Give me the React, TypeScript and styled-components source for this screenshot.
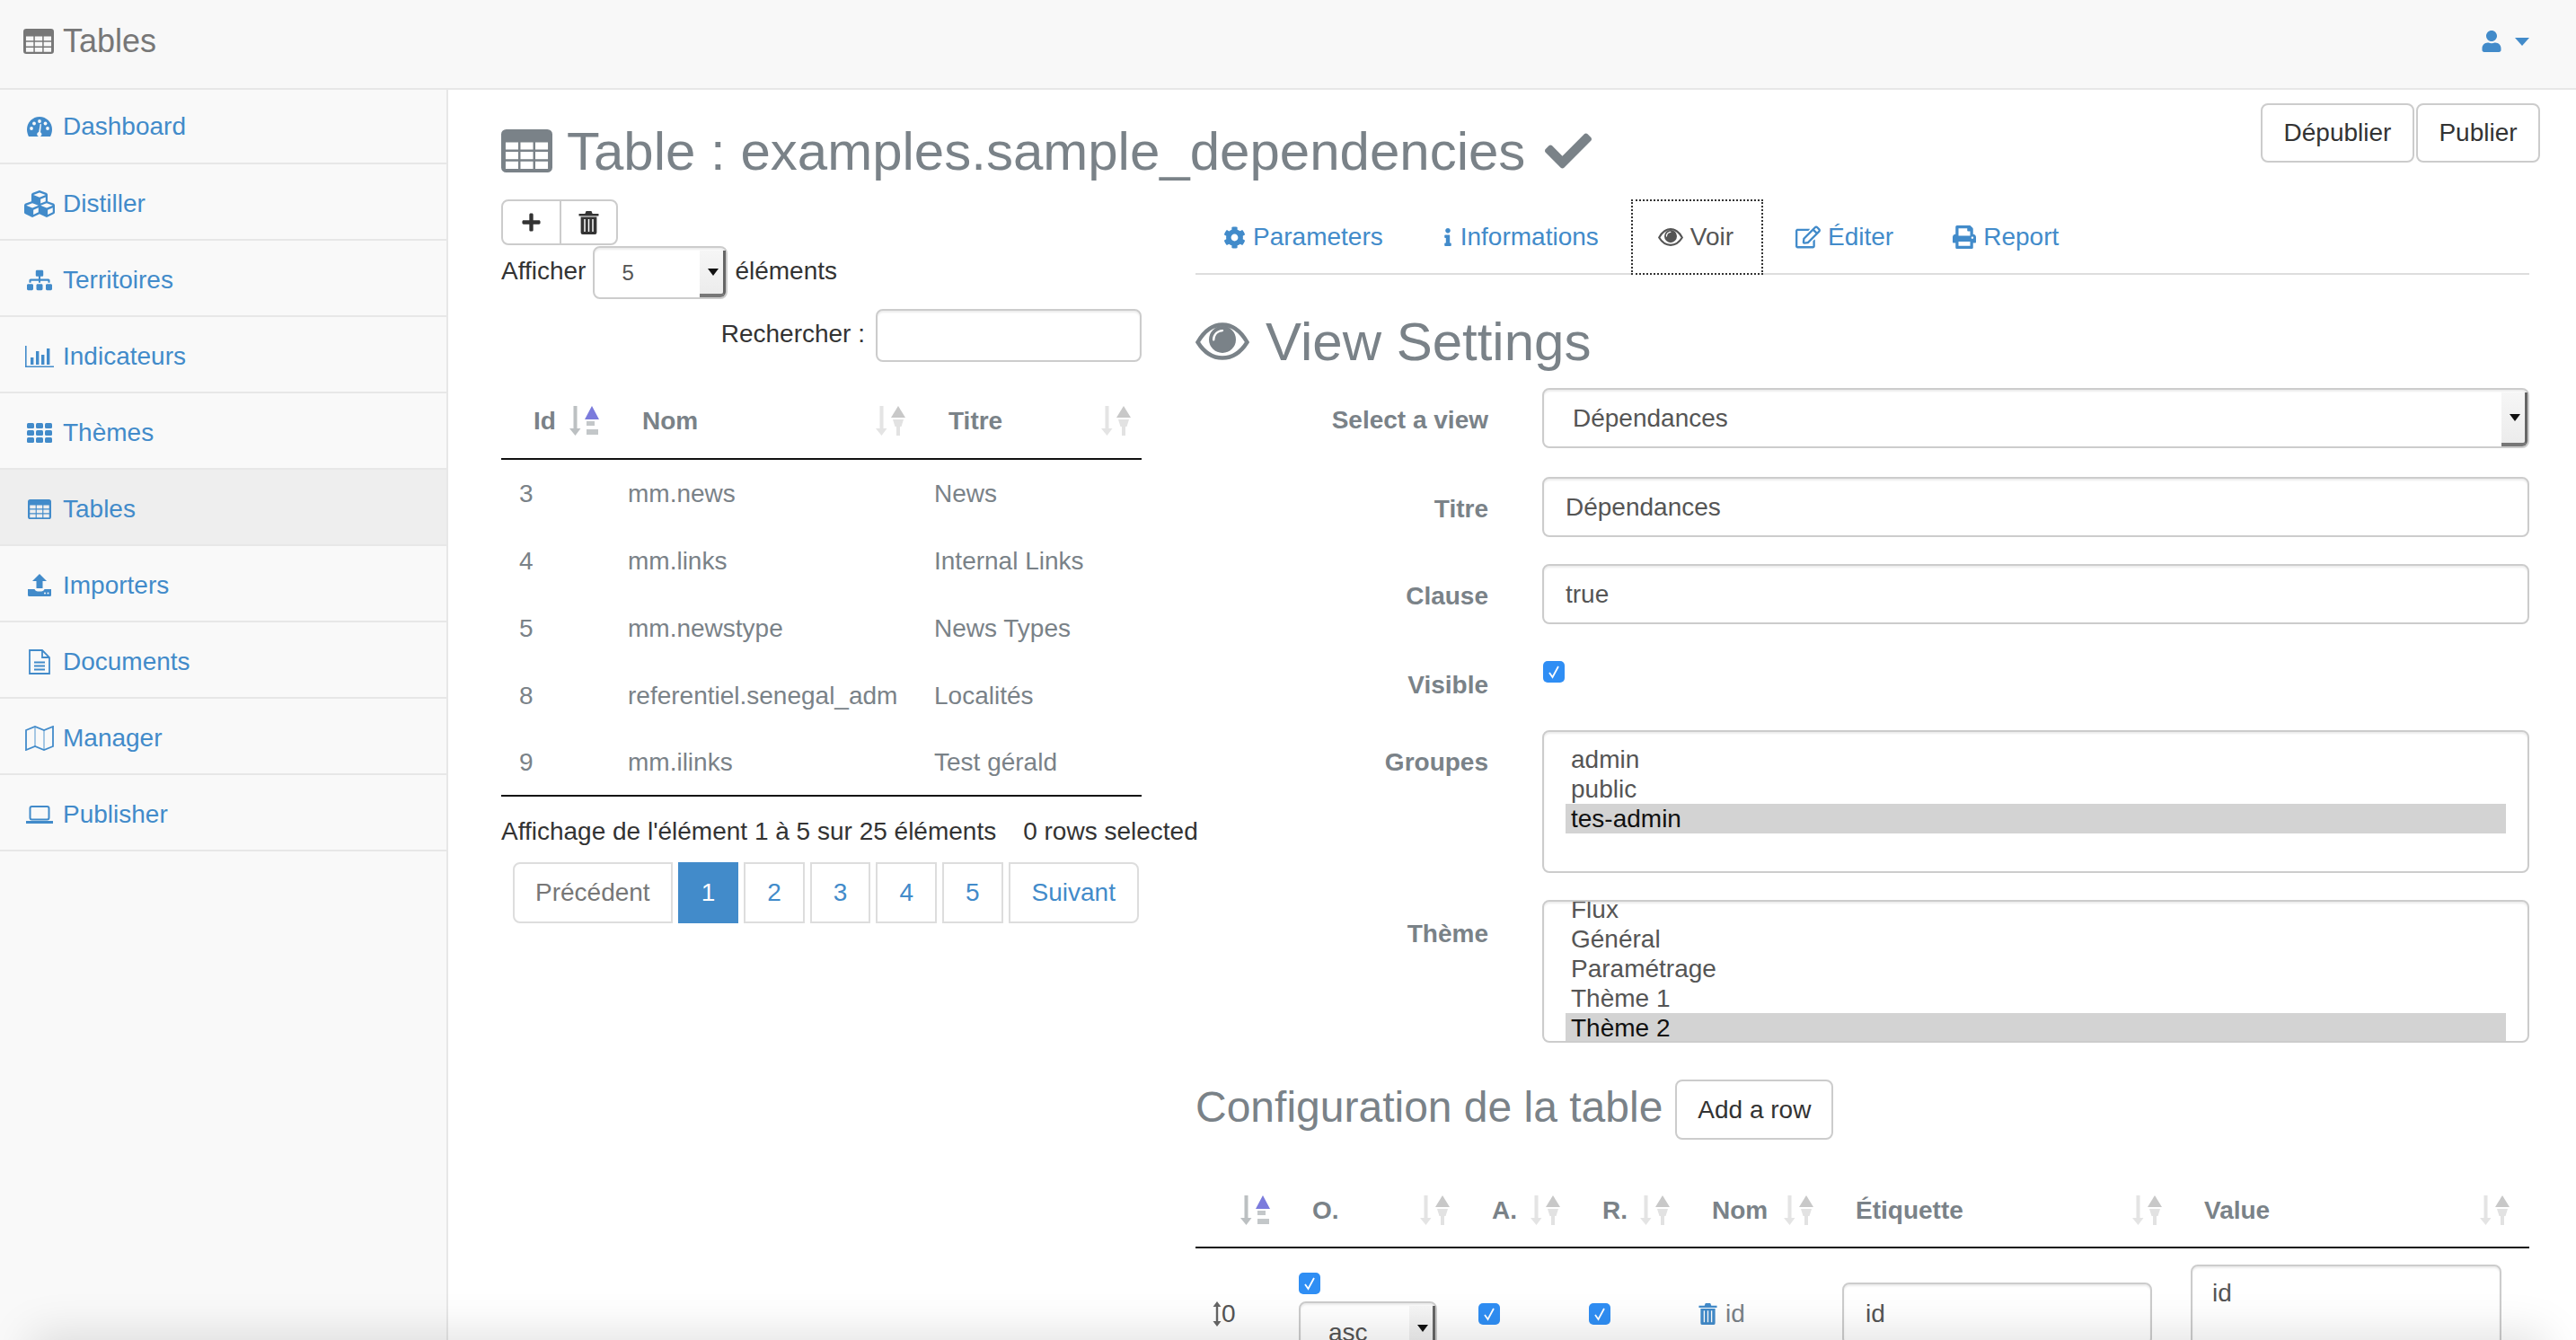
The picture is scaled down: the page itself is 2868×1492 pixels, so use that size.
import React from 'react'
import styled, { createGlobalStyle } from 'styled-components'
import { FaCubes, FaSitemap, FaCheck, FaPlus, FaUser, FaCog, FaInfo, FaPrint, FaRegEdit } from 'react-icons/fa'

const colors = {
  blue: '#428bca',
  grey: '#7a8288',
  text: '#333',
  line: '#e7e7e7',
  field: '#ccc',
}

const GlobalStyle = createGlobalStyle`
  html, body { margin: 0; padding: 0; height: 100%; background: #fff; }
  body { font-family: "Liberation Sans", Arial, sans-serif; font-size: 28px; color: ${colors.text}; }
  * { box-sizing: border-box; }
`

// fa-table, holes are cut out so the row colour shows through
const tableHoles = () => {
  let d = 'M3 0h24a3 3 0 0 1 3 3v20a3 3 0 0 1-3 3H3a3 3 0 0 1-3-3V3a3 3 0 0 1 3-3z'
  for (let r = 0; r < 3; r++) {
    for (let c = 0; c < 3; c++) {
      const x = 2.6 + c * 8.7
      const y = 7.8 + r * 5.8
      d += `M${x} ${y}h7.4v4.4h-7.4z`
    }
  }
  return d
}

const TableIcon = ({ w, h }: { w: number; h: number }) => (
  <svg width={w} height={h} viewBox="0 0 30 26" preserveAspectRatio="none" fill="currentColor">
    <path fillRule="evenodd" d={tableHoles()} />
  </svg>
)

const GaugeIcon = () => (
  <svg width="28" height="22" viewBox="0 0 28 22" fill="currentColor">
    <path d="M14 0C6.3 0 0 6.3 0 14c0 3 .8 5.7 2 8h24c1.2-2.3 2-5 2-8 0-7.700-6.300-14-14-14z" />
    <g fill="#f9f9f9">
      <circle cx="5" cy="13" r="1.900" />
      <circle cx="8" cy="7.500" r="1.900" />
      <circle cx="14" cy="5" r="1.900" />
      <circle cx="20.500" cy="7.500" r="1.900" />
      <circle cx="23" cy="13" r="1.900" />
      <path d="M13.200 17l1.500-9 1.300.2-1 9a2.600 2.600 0 1 1-1.800-.2z" />
    </g>
  </svg>
)

const BarsIcon = () => (
  <svg width="32" height="24" viewBox="0 0 32 24" fill="currentColor">
    <path d="M0 0h1.600v22.400H32V24H0z" />
    <rect x="6" y="13" width="3.400" height="8" />
    <rect x="12" y="6" width="3.400" height="15" />
    <rect x="18" y="10" width="3.400" height="11" />
    <rect x="24" y="3" width="3.400" height="18" />
  </svg>
)

const GridIcon = () => (
  <svg width="28" height="22" viewBox="0 0 28 22" fill="currentColor">
    {[0, 8, 16].map(y =>
      [0, 10, 20].map(x => <rect key={`${x}-${y}`} x={x} y={y} width="8" height="6" rx="1.500" />)
    )}
  </svg>
)

const UploadIcon = () => (
  <svg width="26" height="25" viewBox="0 0 26 25" fill="currentColor">
    <path fillRule="evenodd" d="M13 0l8 8h-4.500v8h-7V8H5zM0 17h7.500c.5 1.500 2 2.500 3.500 2.500h4c1.500 0 3-1 3.500-2.500H26v6.500a1.500 1.500 0 0 1-1.500 1.500h-23A1.500 1.500 0 0 1 0 23.500zM19 20.500a1 1 0 1 0 0 2 1 1 0 0 0 0-2zm3.500 0a1 1 0 1 0 0 2 1 1 0 0 0 0-2z" />
  </svg>
)

const FileIcon = () => (
  <svg width="24" height="28" viewBox="0 0 24 28" fill="none" stroke="currentColor" strokeWidth="1.800">
    <path d="M1 1h14l8 8v18H1zM15 1v8h8" />
    <path d="M6 14.500h12M6 18.500h12M6 22.500h12" />
  </svg>
)

const MapIcon = () => (
  <svg width="32" height="28" viewBox="0 0 32 28" fill="none" stroke="currentColor" strokeWidth="1.800">
    <path d="M1 5l10-4 10 4 10-4v22l-10 4-10-4-10 4z" />
    <path d="M11 2v21M21 5v21" strokeOpacity="0.5" />
  </svg>
)

const LaptopIcon = () => (
  <svg width="30" height="20" viewBox="0 0 30 20" fill="none" stroke="currentColor">
    <rect x="4.500" y="1" width="21" height="14.500" rx="2" strokeWidth="2" />
    <path d="M0 18.500h30" strokeWidth="3" />
  </svg>
)

const EyeIcon = ({ w, h, hole = '#fff' }: { w: number; h: number; hole?: string }) => (
  <svg width={w} height={h} viewBox="0 0 60 42" preserveAspectRatio="none">
    <path d="M2.500 22C10 9 20 2.500 30 2.500S50 9 57.500 22C50 34 40 39.500 30 39.500S10 34 2.500 22z" fill="none" stroke="currentColor" strokeWidth="4.500" />
    <circle cx="30" cy="19" r="15" fill="currentColor" />
    <path d="M19 19c0-6 5-11 11-11 1.500 0 2 2-1 2.500-5 .5-7 4-7.500 8.500-.3 2-2.500 2-2.500 0z" fill={hole} />
  </svg>
)

const TrashIcon = ({ w, h, hole = '#fff' }: { w: number; h: number; hole?: string }) => (
  <svg width={w} height={h} viewBox="0 0 22 26" preserveAspectRatio="none" fill="currentColor">
    <path d="M7 3l1.200-3h5.600L15 3h6.500v2.500H.5V3zM2.500 6.500h17V24a2 2 0 0 1-2 2h-13a2 2 0 0 1-2-2z" />
    <g fill={hole}>
      <rect x="6" y="9" width="1.400" height="14" />
      <rect x="10.300" y="9" width="1.400" height="14" />
      <rect x="14.600" y="9" width="1.400" height="14" />
    </g>
  </svg>
)

const SortIcon = ({ active }: { active?: boolean }) => (
  <svg width="35" height="33" viewBox="0 0 35 33">
    <path d="M5.500 0h4v25h4L7.500 33 1 25h4.500z" fill={active ? '#bcc0c2' : '#e4e4e4'} />
    {active ? (
      <>
        <path d="M26 0l8 15H18z" fill="#7b7bdc" />
        <rect x="20" y="17" width="9" height="5" fill="#c3c7c9" />
        <rect x="20" y="26" width="13" height="6" fill="#c3c7c9" />
      </>
    ) : (
      <>
        <path d="M26 0l8 13H18z" fill="#c8c8c8" />
        <path d="M20 15h12l-2.500 8h-1.500v10h-4V23h-1.500z" fill="#e2e2e2" />
      </>
    )}
  </svg>
)

const MoveIcon = () => (
  <svg width="10" height="28" viewBox="0 0 10 28" fill="#666">
    <path d="M5 0l4.500 6H6.200v16h3.300L5 28 .5 22h3.300V6H.5z" />
  </svg>
)

const CheckBox = () => (
  <S.Check>
    <svg width="14" height="16" viewBox="0 0 14 16" fill="none" stroke="#fff" strokeWidth="1.800">
      <path d="M2 9l3.500 5L12 2" />
    </svg>
  </S.Check>
)

const menu = [
  { label: 'Dashboard', icon: <GaugeIcon /> },
  { label: 'Distiller', icon: <FaCubes size={34} /> },
  { label: 'Territoires', icon: <FaSitemap size={28} /> },
  { label: 'Indicateurs', icon: <BarsIcon /> },
  { label: 'Thèmes', icon: <GridIcon /> },
  { label: 'Tables', icon: <TableIcon w={26} h={22} />, active: true },
  { label: 'Importers', icon: <UploadIcon /> },
  { label: 'Documents', icon: <FileIcon /> },
  { label: 'Manager', icon: <MapIcon /> },
  { label: 'Publisher', icon: <LaptopIcon /> },
]

const rows = [
  ['3', 'mm.news', 'News'],
  ['4', 'mm.links', 'Internal Links'],
  ['5', 'mm.newstype', 'News Types'],
  ['8', 'referentiel.senegal_adm', 'Localités'],
  ['9', 'mm.ilinks', 'Test gérald'],
]

export default function App() {
  return (
    <S.Page>
      <GlobalStyle />
      <S.Navbar>
        <S.Brand>
          <TableIcon w={34} h={28} />
          Tables
        </S.Brand>
        <S.UserMenu>
          <FaUser size={24} />
          <S.Caret />
        </S.UserMenu>
      </S.Navbar>

      <S.Body>
        <S.Sidebar>
          {menu.map(item => (
            <S.MenuItem key={item.label} $active={item.active}>
              <S.MenuIcon>{item.icon}</S.MenuIcon>
              {item.label}
            </S.MenuItem>
          ))}
        </S.Sidebar>

        <S.Main>
          <S.TitleRow>
            <S.Title>
              <TableIcon w={57} h={48} />
              Table : examples.sample_dependencies
              <FaCheck size={52} />
            </S.Title>
            <S.PublishGroup>
              <S.Button $width={171} $height={66}>Dépublier</S.Button>
              <S.Button $width={138} $height={66}>Publier</S.Button>
            </S.PublishGroup>
          </S.TitleRow>

          <S.Columns>
            <div>
              <S.IconGroup>
                <S.IconButton><FaPlus size={23} /></S.IconButton>
                <S.IconButton><TrashIcon w={23} h={26} /></S.IconButton>
              </S.IconGroup>

              <S.LengthRow>
                <S.RowText>Afficher</S.RowText>
                <S.Select $width={150} $height={59} $small>
                  5
                  <S.SelectArrow />
                </S.Select>
                <S.RowText>éléments</S.RowText>
              </S.LengthRow>

              <S.SearchRow>
                <S.RowText>Rechercher :</S.RowText>
                <S.Field $width={296} $height={59} />
              </S.SearchRow>

              <S.DataTable>
                <colgroup>
                  <col width={121} />
                  <col width={341} />
                  <col width={251} />
                </colgroup>
                <thead>
                  <tr>
                    <S.Th><S.ThInner>Id<SortIcon active /></S.ThInner></S.Th>
                    <S.Th><S.ThInner>Nom<SortIcon /></S.ThInner></S.Th>
                    <S.Th><S.ThInner>Titre<SortIcon /></S.ThInner></S.Th>
                  </tr>
                </thead>
                <tbody>
                  {rows.map(row => (
                    <S.Tr key={row[0]}>
                      {row.map(cell => <S.Td key={cell}>{cell}</S.Td>)}
                    </S.Tr>
                  ))}
                </tbody>
              </S.DataTable>

              <S.Info>
                Affichage de l'élément 1 à 5 sur 25 éléments
                <span>0 rows selected</span>
              </S.Info>

              <S.Pagination>
                <S.PageLink $disabled $first>Précédent</S.PageLink>
                <S.PageLink $current>1</S.PageLink>
                <S.PageLink>2</S.PageLink>
                <S.PageLink>3</S.PageLink>
                <S.PageLink>4</S.PageLink>
                <S.PageLink>5</S.PageLink>
                <S.PageLink $last>Suivant</S.PageLink>
              </S.Pagination>
            </div>

            <div>
              <S.Tabs>
                <S.Tab><FaCog size={25} />Parameters</S.Tab>
                <S.Tab><S.InfoGlyph><FaInfo size={20} /></S.InfoGlyph>Informations</S.Tab>
                <S.Tab $active><EyeIcon w={28} h={20} />Voir</S.Tab>
                <S.Tab><FaRegEdit size={28} />Éditer</S.Tab>
                <S.Tab><FaPrint size={26} />Report</S.Tab>
              </S.Tabs>

              <S.ViewTitle>
                <EyeIcon w={60} h={42} />
                View Settings
              </S.ViewTitle>

              <S.FormRow $height={69}>
                <S.Label>Select a view</S.Label>
                <S.Select $height={67}>
                  Dépendances
                  <S.SelectArrow />
                </S.Select>
              </S.FormRow>
              <S.FormRow $height={67}>
                <S.Label>Titre</S.Label>
                <S.Field $height={67}>Dépendances</S.Field>
              </S.FormRow>
              <S.FormRow $height={67}>
                <S.Label>Clause</S.Label>
                <S.Field $height={67}>true</S.Field>
              </S.FormRow>
              <S.FormRow $height={58}>
                <S.Label $low>Visible</S.Label>
                <S.VisibleBox><CheckBox /></S.VisibleBox>
              </S.FormRow>
              <S.FormRow $height={159}>
                <S.Label>Groupes</S.Label>
                <S.ListBox>
                  <S.Spacer $height={14} />
                  <S.Option>admin</S.Option>
                  <S.Option>public</S.Option>
                  <S.Option $selected>tes-admin</S.Option>
                </S.ListBox>
              </S.FormRow>
              <S.FormRow $height={159}>
                <S.Label $low>Thème</S.Label>
                <S.ListBox>
                  <S.Spacer $height={-8} />
                  <S.Option>Flux</S.Option>
                  <S.Option>Général</S.Option>
                  <S.Option>Paramétrage</S.Option>
                  <S.Option>Thème 1</S.Option>
                  <S.Option $selected>Thème 2</S.Option>
                </S.ListBox>
              </S.FormRow>

              <S.ConfigHead>
                <S.ConfigTitle>Configuration de la table</S.ConfigTitle>
                <S.Button $width={176} $height={67}>Add a row</S.Button>
              </S.ConfigHead>

              <S.ConfigTable>
                <colgroup>
                  <col width={96} />
                  <col width={200} />
                  <col width={123} />
                  <col width={122} />
                  <col width={160} />
                  <col width={388} />
                  <col width={396} />
                </colgroup>
                <thead>
                  <tr>
                    <S.ConfigTh><S.ConfigThInner $end><SortIcon active /></S.ConfigThInner></S.ConfigTh>
                    {['O.', 'A.', 'R.', 'Nom', 'Étiquette', 'Value'].map(name => (
                      <S.ConfigTh key={name}><S.ConfigThInner>{name}<SortIcon /></S.ConfigThInner></S.ConfigTh>
                    ))}
                  </tr>
                </thead>
                <tbody>
                  <tr>
                    <S.ConfigTd><S.Order><MoveIcon />0</S.Order></S.ConfigTd>
                    <S.ConfigTd>
                      <S.OrderStack>
                        <CheckBox />
                        <S.Select $width={154} $height={60} $low>
                          asc
                          <S.SelectArrow />
                        </S.Select>
                      </S.OrderStack>
                    </S.ConfigTd>
                    <S.ConfigTd><CheckBox /></S.ConfigTd>
                    <S.ConfigTd><CheckBox /></S.ConfigTd>
                    <S.ConfigTd><S.NameCell><TrashIcon w={21} h={24} />id</S.NameCell></S.ConfigTd>
                    <S.ConfigTd><S.Field $width={345} $height={70}>id</S.Field></S.ConfigTd>
                    <S.ConfigTd><S.TextArea>id</S.TextArea></S.ConfigTd>
                  </tr>
                </tbody>
              </S.ConfigTable>
            </div>
          </S.Columns>
        </S.Main>
      </S.Body>

      <S.BottomShade><S.ShadeCaster /></S.BottomShade>
    </S.Page>
  )
}

const S = {
  Page: styled.div`
    position: relative;
    width: 2868px;
    height: 1492px;
    overflow: hidden;
    background: #fff;
  `,
  Navbar: styled.header`
    height: 100px;
    display: flex;
    align-items: center;
    justify-content: space-between;
    padding: 0 52px 6px 26px;
    background: #f8f8f8;
    border-bottom: 2px solid ${colors.line};
  `,
  Brand: styled.div`
    display: flex;
    align-items: center;
    gap: 10px;
    font-size: 36px;
    color: #777;
  `,
  UserMenu: styled.div`
    display: flex;
    align-items: center;
    gap: 14px;
    color: ${colors.blue};
  `,
  Caret: styled.span`
    width: 0;
    height: 0;
    border-left: 8px solid transparent;
    border-right: 8px solid transparent;
    border-top: 9px solid ${colors.blue};
  `,
  Body: styled.div`
    display: flex;
    height: 1392px;
  `,
  Sidebar: styled.nav`
    flex: 0 0 499px;
    background: #f9f9f9;
    border-right: 2px solid ${colors.line};
  `,
  MenuItem: styled.a<{ $active?: boolean }>`
    display: flex;
    align-items: center;
    height: 85px;
    padding: 4px 0 0 26px;
    color: ${colors.blue};
    background: ${p => (p.$active ? '#eee' : 'transparent')};
    border-bottom: 2px solid ${colors.line};

    &:first-child {
      height: 83px;
      padding-top: 0;
    }
  `,
  MenuIcon: styled.span`
    flex: 0 0 36px;
    display: flex;
    justify-content: center;
    margin-right: 8px;
  `,
  Main: styled.main`
    flex: 1;
    min-width: 0;
    padding: 0 52px 0 59px;
  `,
  TitleRow: styled.div`
    height: 122px;
    display: flex;
    justify-content: space-between;
    color: ${colors.grey};
  `,
  Title: styled.h1`
    display: flex;
    align-items: center;
    gap: 16px;
    height: 66px;
    margin: 35px 0 0;
    font-size: 60px;
    font-weight: 400;
    white-space: nowrap;

    svg:last-child {
      margin-left: 6px;
    }
  `,
  PublishGroup: styled.div`
    display: flex;
    gap: 2px;
    margin: 15px -12px 0 0;
    height: 66px;
  `,
  Button: styled.button<{ $width: number; $height: number }>`
    flex: none;
    width: ${p => p.$width}px;
    height: ${p => p.$height}px;
    padding: 0;
    font: inherit;
    color: ${colors.text};
    background: #fff;
    border: 2px solid ${colors.field};
    border-radius: 8px;
  `,
  Columns: styled.div`
    display: grid;
    grid-template-columns: 713px 1485px;
    column-gap: 60px;
  `,
  IconGroup: styled.div`
    display: inline-flex;
    vertical-align: top;
    height: 51px;
    border: 2px solid ${colors.field};
    border-radius: 8px;
  `,
  IconButton: styled.span`
    width: 63px;
    display: flex;
    align-items: center;
    justify-content: center;
    color: ${colors.text};

    & + & {
      border-left: 2px solid ${colors.field};
    }
  `,
  LengthRow: styled.div`
    display: flex;
    align-items: center;
    gap: 8px;
    height: 59px;
    margin-top: 1px;
  `,
  RowText: styled.span`
    margin-bottom: 4px;
  `,
  SearchRow: styled.div`
    display: flex;
    align-items: center;
    justify-content: flex-end;
    gap: 12px;
    height: 59px;
    margin-top: 11px;
  `,
  Field: styled.div<{ $width?: number; $height: number }>`
    flex: none;
    width: ${p => (p.$width ? `${p.$width}px` : 'auto')};
    height: ${p => p.$height}px;
    display: flex;
    align-items: center;
    padding: 0 24px;
    color: #555;
    background: #fff;
    border: 2px solid ${colors.field};
    border-radius: 8px;
    box-shadow: inset 0 2px 2px rgba(0, 0, 0, 0.075);
  `,
  Select: styled.div<{ $width?: number; $height: number; $small?: boolean; $low?: boolean }>`
    position: relative;
    flex: none;
    width: ${p => (p.$width ? `${p.$width}px` : 'auto')};
    height: ${p => p.$height}px;
    display: flex;
    align-items: center;
    padding: ${p => (p.$low ? '10px 0 0 31px' : p.$small ? '0 0 0 30px' : '0 0 0 32px')};
    font-size: ${p => (p.$small ? '24px' : '28px')};
    color: #555;
    background: #fff;
    border: 2px solid ${colors.field};
    border-radius: 8px;
    box-shadow: inset 0 2px 2px rgba(0, 0, 0, 0.075);
  `,
  SelectArrow: styled.span`
    position: absolute;
    top: 3px;
    right: 0;
    bottom: 0;
    width: 29px;
    background: linear-gradient(#f6f6f6, #ececec);
    border-right: 3px solid #666;
    border-bottom: 4px solid #777;
    border-bottom-right-radius: 6px;

    &::after {
      content: '';
      position: absolute;
      top: 50%;
      left: 9px;
      margin-top: -4px;
      border-left: 6px solid transparent;
      border-right: 6px solid transparent;
      border-top: 8px solid #111;
    }
  `,
  DataTable: styled.table`
    width: 713px;
    table-layout: fixed;
    border-collapse: collapse;
    border-bottom: 2px solid #111;
  `,
  Th: styled.th`
    height: 108px;
    padding: 24px 11px 0 36px;
    text-align: left;
    font-weight: 700;
    color: ${colors.grey};
    border-bottom: 2px solid #111;
  `,
  ThInner: styled.div`
    display: flex;
    align-items: center;
    justify-content: space-between;
  `,
  Tr: styled.tr`
    height: 75px;
  `,
  Td: styled.td`
    padding: 2px 0 0 20px;
    color: ${colors.grey};
    white-space: nowrap;
  `,
  Info: styled.div`
    display: flex;
    gap: 30px;
    height: 73px;
    padding-top: 4px;
    align-items: center;
    white-space: nowrap;
  `,
  Pagination: styled.div`
    display: flex;
    gap: 6px;
    margin-left: 13px;
  `,
  PageLink: styled.a<{ $current?: boolean; $disabled?: boolean; $first?: boolean; $last?: boolean }>`
    height: 68px;
    display: flex;
    align-items: center;
    padding: 0 ${p => (p.$first ? 23 : 24)}px;
    color: ${p => (p.$current ? '#fff' : p.$disabled ? '#777' : colors.blue)};
    background: ${p => (p.$current ? colors.blue : '#fff')};
    border: 2px solid ${p => (p.$current ? colors.blue : '#ddd')};
    border-radius: ${p => (p.$first ? '8px 0 0 8px' : p.$last ? '0 8px 8px 0' : '0')};
  `,
  Tabs: styled.div`
    display: flex;
    gap: 6px;
    height: 84px;
    padding-left: 1px;
    border-bottom: 2px solid #ddd;
  `,
  Tab: styled.a<{ $active?: boolean }>`
    display: flex;
    align-items: center;
    gap: 8px;
    height: 84px;
    padding: 0 ${p => (p.$active ? 33 : 30)}px 0 30px;
    color: ${p => (p.$active ? '#555' : colors.blue)};
    background: ${p => (p.$active ? '#fff' : 'transparent')};
    outline: ${p => (p.$active ? '2px dotted #333' : 'none')};
    outline-offset: -2px;
  `,
  InfoGlyph: styled.span`
    width: 12px;
    display: flex;
    justify-content: center;
  `,
  ViewTitle: styled.h1`
    display: flex;
    align-items: center;
    gap: 18px;
    height: 66px;
    margin: 41px 0 19px;
    font-size: 60px;
    font-weight: 400;
    color: ${colors.grey};
  `,
  FormRow: styled.div<{ $height: number }>`
    display: grid;
    grid-template-columns: 326px 1099px;
    column-gap: 60px;
    height: ${p => p.$height}px;
    margin-bottom: 30px;
  `,
  Label: styled.label<{ $low?: boolean }>`
    padding-top: ${p => (p.$low ? 22 : 20)}px;
    line-height: 32px;
    text-align: right;
    font-weight: 700;
    color: ${colors.grey};
  `,
  VisibleBox: styled.div`
    padding: 11px 0 0 1px;
  `,
  Check: styled.span`
    flex: none;
    display: flex;
    align-items: center;
    justify-content: center;
    width: 24px;
    height: 24px;
    background: #2f8ef4;
    border-radius: 5px;
  `,
  ListBox: styled.div`
    height: 159px;
    padding: 0 24px;
    overflow: hidden;
    color: #555;
    background: #fff;
    border: 2px solid ${colors.field};
    border-radius: 8px;
    box-shadow: inset 0 2px 2px rgba(0, 0, 0, 0.075);
  `,
  Spacer: styled.div<{ $height: number }>`
    margin-top: ${p => p.$height}px;
  `,
  Option: styled.div<{ $selected?: boolean }>`
    height: 33px;
    line-height: 33px;
    padding-left: 6px;
    color: ${p => (p.$selected ? '#111' : '#555')};
    background: ${p => (p.$selected ? '#d3d3d3' : 'transparent')};
  `,
  ConfigHead: styled.div`
    display: flex;
    align-items: center;
    gap: 14px;
    margin-top: 41px;
    height: 67px;
  `,
  ConfigTitle: styled.h2`
    margin: 0;
    padding-bottom: 6px;
    font-size: 48px;
    font-weight: 400;
    color: ${colors.grey};
    white-space: nowrap;
  `,
  ConfigTable: styled.table`
    width: 1485px;
    table-layout: fixed;
    border-collapse: collapse;
  `,
  ConfigTh: styled.th`
    height: 120px;
    padding: 38px 12px 0 34px;
    font-weight: 700;
    text-align: left;
    color: ${colors.grey};
    border-bottom: 2px solid #111;

    &:last-child {
      padding-right: 21px;
    }
  `,
  ConfigThInner: styled.div<{ $end?: boolean }>`
    display: flex;
    align-items: center;
    justify-content: ${p => (p.$end ? 'flex-end' : 'space-between')};
  `,
  ConfigTd: styled.td`
    padding: 18px 0 0 19px;
    vertical-align: middle;
    color: #555;
  `,
  Order: styled.div`
    display: flex;
    align-items: center;
  `,
  OrderStack: styled.div`
    display: flex;
    flex-direction: column;
    align-items: flex-start;
    gap: 8px;
  `,
  NameCell: styled.div`
    display: flex;
    align-items: center;
    gap: 9px;
    color: ${colors.grey};

    svg {
      color: ${colors.blue};
    }
  `,
  TextArea: styled.div`
    width: 346px;
    height: 110px;
    padding: 14px 22px;
    color: #555;
    background: #fff;
    border: 2px solid ${colors.field};
    border-radius: 8px;
    box-shadow: inset 0 2px 2px rgba(0, 0, 0, 0.075);
  `,
  BottomShade: styled.div`
    position: absolute;
    left: 0;
    right: 0;
    bottom: 0;
    height: 90px;
    overflow: hidden;
    pointer-events: none;
  `,
  ShadeCaster: styled.div`
    position: absolute;
    left: 40px;
    right: 40px;
    top: 90px;
    height: 40px;
    box-shadow: 0 0 50px 6px rgba(0, 0, 0, 0.13);
  `,
}
